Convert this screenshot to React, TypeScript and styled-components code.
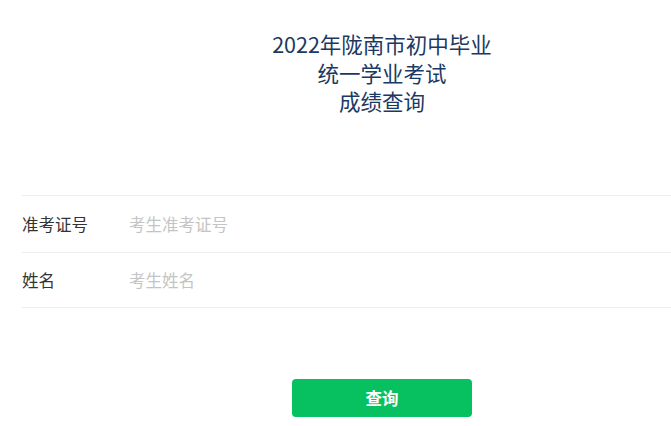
import React from 'react'
import styled, { createGlobalStyle } from 'styled-components'

const GlobalStyle = createGlobalStyle`
  html, body {
    margin: 0;
    padding: 0;
    background: #ffffff;
  }
  body {
    font-family: "Noto Sans CJK SC", "Noto Sans", sans-serif;
  }
`

const Viewport = styled.div`
  width: 100%;
  overflow: hidden;
`

const Page = styled.div`
  width: 720px;
  margin-left: 22px;
  padding-top: 30px;
`

const Title = styled.h1`
  margin: 0;
  text-align: center;
  font-size: 21.5px;
  line-height: 28.6px;
  font-weight: 400;
  color: #1b3a63;
`

const Form = styled.form`
  margin-top: 79px;
  border-top: 1px solid #ededed;
`

const Row = styled.div<{ $height: number }>`
  display: flex;
  align-items: center;
  height: ${p => p.$height}px;
  border-bottom: 1px solid #ededed;
`

const Label = styled.label`
  width: 107px;
  flex-shrink: 0;
  font-size: 16.5px;
  color: #333333;
`

const Input = styled.input`
  flex: 1;
  border: none;
  outline: none;
  padding: 0;
  background: transparent;
  font-family: inherit;
  font-size: 16.5px;
  color: #333333;

  &::placeholder {
    color: #c4c4c4;
  }
`

const Actions = styled.div`
  display: flex;
  justify-content: center;
  margin-top: 71px;
`

const Button = styled.button`
  width: 180px;
  height: 38px;
  border: none;
  border-radius: 4px;
  background: #07c160;
  color: #ffffff;
  font-family: inherit;
  font-size: 16.5px;
  font-weight: 700;
  cursor: pointer;
`

export default () => (
  <>
    <GlobalStyle />
    <Viewport>
      <Page>
        <Title>
          2022年陇南市初中毕业
          <br />
          统一学业考试
          <br />
          成绩查询
        </Title>
        <Form onSubmit={e => e.preventDefault()}>
          <Row $height={56}>
            <Label>准考证号</Label>
            <Input placeholder="考生准考证号" />
          </Row>
          <Row $height={54}>
            <Label>姓名</Label>
            <Input placeholder="考生姓名" />
          </Row>
        </Form>
        <Actions>
          <Button type="submit">查询</Button>
        </Actions>
      </Page>
    </Viewport>
  </>
)
